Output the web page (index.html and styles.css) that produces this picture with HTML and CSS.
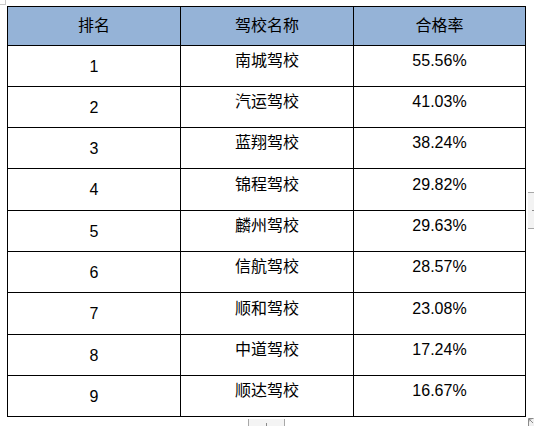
FILE: index.html
```html
<!DOCTYPE html>
<html lang="zh-CN">
<head>
<meta charset="utf-8">
<title>驾校合格率排名</title>
<link rel="stylesheet" href="styles.css">
</head>
<body>
<div class="corner"></div>
<div class="sheet">
  <div class="c h">排名</div>
  <div class="c h">驾校名称</div>
  <div class="c h">合格率</div>

  <div class="c n">1</div><div class="c s">南城驾校</div><div class="c s">55.56%</div>
  <div class="c n">2</div><div class="c s">汽运驾校</div><div class="c s">41.03%</div>
  <div class="c n">3</div><div class="c s">蓝翔驾校</div><div class="c s">38.24%</div>
  <div class="c n">4</div><div class="c s">锦程驾校</div><div class="c s">29.82%</div>
  <div class="c n">5</div><div class="c s">麟州驾校</div><div class="c s">29.63%</div>
  <div class="c n">6</div><div class="c s">信航驾校</div><div class="c s">28.57%</div>
  <div class="c n">7</div><div class="c s">顺和驾校</div><div class="c s">23.08%</div>
  <div class="c n">8</div><div class="c s">中道驾校</div><div class="c s">17.24%</div>
  <div class="c n">9</div><div class="c s">顺达驾校</div><div class="c s">16.67%</div>
</div>
<div class="side-tab"><span class="dash"></span></div>
<div class="bottom-box"><span class="tick"></span></div>
<div class="resize">
  <svg width="6" height="8" viewBox="0 0 6 8"><path d="M0.5 0.5H5.5M0.5 0.5V8M1 1L5 5M1 3.5V1H3.5" stroke="#8a8a8a" stroke-width="1" fill="none"/></svg>
</div>
</body>
</html>
```
FILE: styles.css
```css
html, body {
  margin: 0;
  padding: 0;
  background: #ffffff;
}
body {
  width: 534px;
  height: 426px;
  overflow: hidden;
  position: relative;
  font-family: "Liberation Sans", "Noto Sans CJK SC", sans-serif;
  font-size: 16px;
  color: #000;
}
.sheet {
  margin: 6px 0 0 7px;
  width: 518px;
  display: grid;
  grid-template-columns: 173px 173px 172px;
  grid-template-rows: 39px 41px 41px 41px 42px 41px 41px 42px 41px 41px;
  border-left: 1px solid #000;
  border-top: 1px solid #000;
}
.c {
  border-right: 1px solid #000;
  border-bottom: 1px solid #000;
  display: flex;
  align-items: center;
  justify-content: center;
  line-height: 1;
}
.h {
  background: #95b3d7;
}
.n {
  padding-top: 1px;
}
.s {
  padding-bottom: 10px;
}
.corner {
  position: absolute;
  left: 0;
  top: 0;
  width: 5px;
  height: 4px;
  border-right: 1px solid #c8c8c8;
  border-bottom: 1px solid #c8c8c8;
}
.side-tab {
  position: absolute;
  left: 528px;
  top: 192px;
  width: 6px;
  height: 35px;
  background: #f3f3f3;
  border-top: 1px solid #a8a8a8;
  border-bottom: 1px solid #a8a8a8;
}
.side-tab .dash {
  position: absolute;
  left: 4px;
  top: 17px;
  width: 2px;
  height: 1px;
  background: #8a8a8a;
}
.bottom-box {
  position: absolute;
  left: 248px;
  top: 419px;
  width: 35px;
  height: 7px;
  background: #f4f4f4;
  border-left: 1px solid #a8a8a8;
  border-right: 1px solid #a8a8a8;
}
.bottom-box .tick {
  position: absolute;
  left: 17px;
  top: 4px;
  width: 1px;
  height: 3px;
  background: #8a8a8a;
}
.resize {
  position: absolute;
  left: 528px;
  top: 418px;
  width: 6px;
  height: 8px;
  background: #f0f0f0;
}
.resize svg {
  display: block;
}
```
